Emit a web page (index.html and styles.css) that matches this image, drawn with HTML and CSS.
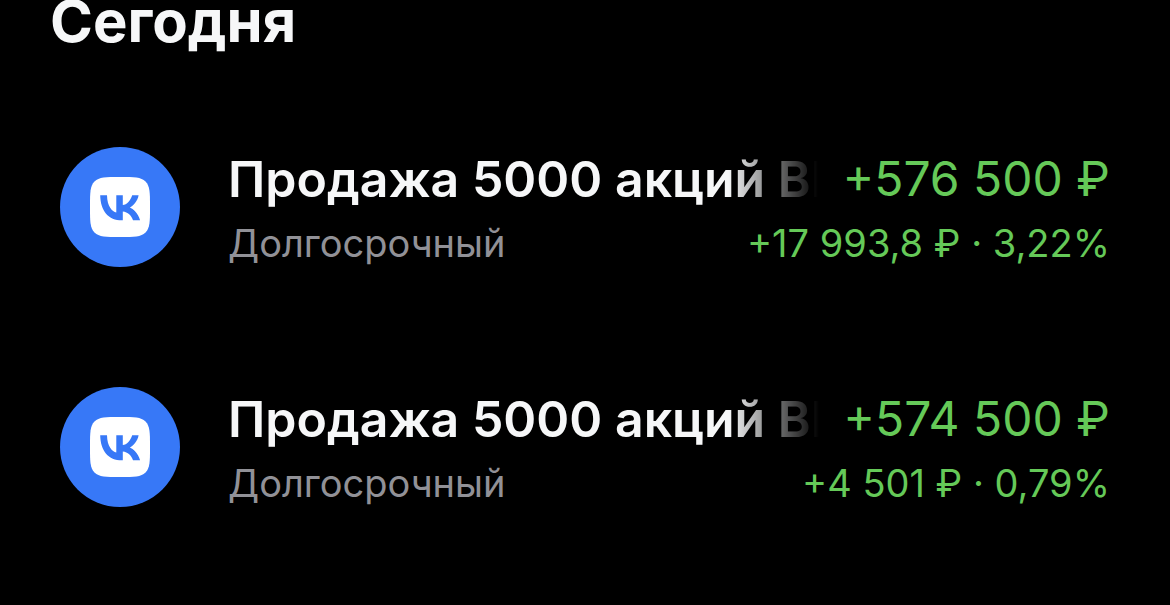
FILE: index.html
```html
<!DOCTYPE html>
<html lang="ru">
<head>
<meta charset="utf-8">
<meta name="viewport" content="width=device-width, initial-scale=1">
<title>Операции</title>
<link rel="stylesheet" href="styles.css">
</head>
<body>
<main class="operations">
  <h1 class="day">Сегодня</h1>
  <ul class="list">
    <li class="item">
      <svg class="logo" viewBox="0 0 120 120" role="img" aria-label="VK">
        <circle cx="60" cy="60" r="60" fill="#3778f7"/>
        <path fill="#fff" d="M59 30h2c13 0 20 0 24.500 4.500S90 46 90 59v2c0 13 0 20-4.500 24.500S74 90 61 90h-2c-13 0-20 0-24.500-4.500S30 74 30 61v-2c0-13 0-20 4.500-24.500S46 30 59 30z"/>
        <path fill="#3778f7" d="M62 73.300c-13.700 0-21.500-9.400-21.800-25.100H47c.2 11.500 5.300 16.300 9.300 17.300V48.200h6.500v9.900c3.900-.4 8-4.900 9.400-9.900h6.400c-1 6-5.500 10.500-8.700 12.300 3.200 1.500 8.300 5.400 10.200 12.800H73c-1.500-4.700-5.200-8.300-10.200-8.800v8.800z"/>
      </svg>
      <div class="body">
        <div class="row">
          <span class="title">Продажа 5000 акций ВК</span>
          <span class="amount">+576 500 ₽</span>
        </div>
        <div class="row">
          <span class="account">Долгосрочный</span>
          <span class="profit">+17 993,8 ₽ · 3,22%</span>
        </div>
      </div>
    </li>
    <li class="item">
      <svg class="logo" viewBox="0 0 120 120" role="img" aria-label="VK">
        <circle cx="60" cy="60" r="60" fill="#3778f7"/>
        <path fill="#fff" d="M59 30h2c13 0 20 0 24.500 4.500S90 46 90 59v2c0 13 0 20-4.500 24.500S74 90 61 90h-2c-13 0-20 0-24.500-4.500S30 74 30 61v-2c0-13 0-20 4.500-24.500S46 30 59 30z"/>
        <path fill="#3778f7" d="M62 73.300c-13.700 0-21.500-9.400-21.800-25.100H47c.2 11.500 5.300 16.300 9.300 17.300V48.200h6.500v9.900c3.900-.4 8-4.900 9.400-9.900h6.400c-1 6-5.500 10.500-8.700 12.300 3.200 1.500 8.300 5.400 10.200 12.800H73c-1.500-4.700-5.200-8.300-10.200-8.800v8.800z"/>
      </svg>
      <div class="body">
        <div class="row">
          <span class="title">Продажа 5000 акций ВК</span>
          <span class="amount">+574 500 ₽</span>
        </div>
        <div class="row">
          <span class="account">Долгосрочный</span>
          <span class="profit">+4 501 ₽ · 0,79%</span>
        </div>
      </div>
    </li>
  </ul>
</main>
</body>
</html>
```
FILE: styles.css
```css
* {
  box-sizing: border-box;
}

body {
  margin: 0;
  background: #000;
  color: #f6f7f8;
  font-family: Inter, "Liberation Sans", sans-serif;
}

.day {
  margin: 0;
  padding: 0 50px 45px;
  font-size: 58px;
  line-height: 42px;
  font-weight: 700;
}

.list {
  margin: 0;
  padding: 0;
  list-style: none;
}

.item {
  display: flex;
  align-items: flex-start;
  gap: 48px;
  padding: 60px 60px 52px;
}

.logo {
  flex: none;
  width: 120px;
  height: 120px;
}

.body {
  flex: 1;
  min-width: 0;
}

.row {
  display: flex;
  justify-content: space-between;
  gap: 24px;
  line-height: 64px;
  white-space: nowrap;
}

.title {
  flex: 1;
  min-width: 0;
  overflow: hidden;
  font-size: 50px;
  font-weight: 600;
  -webkit-mask-image: linear-gradient(to left, transparent, #000 90px);
  mask-image: linear-gradient(to left, transparent, #000 90px);
}

.amount {
  color: #65c958;
  font-size: 48px;
}

.account {
  color: #919197;
  font-size: 38px;
}

.profit {
  color: #65c958;
  font-size: 38px;
}
```
